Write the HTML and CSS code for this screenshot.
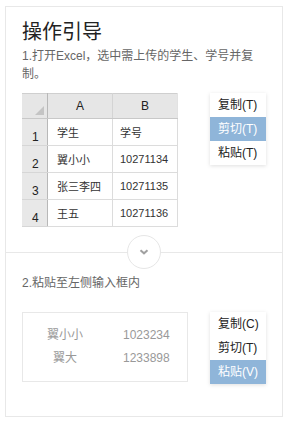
FILE: index.html
```html
<!DOCTYPE html>
<html>

<head>
  <meta charset="utf-8">
  <title>操作引导</title>
  <link rel="stylesheet" href="styles.css">
</head>

<body>
  <div class="panel">
    <div class="section">
      <h1 class="title">操作引导</h1>
      <p class="step">1.打开Excel，选中需上传的学生、学号并复制。</p>

      <div class="row">
        <table class="sheet">
          <tr class="head">
            <th class="corner"><span class="tri"></span></th>
            <th>A</th>
            <th>B</th>
          </tr>
          <tr>
            <td class="num">1</td>
            <td class="col-a">学生</td>
            <td class="col-b">学号</td>
          </tr>
          <tr>
            <td class="num">2</td>
            <td class="col-a">翼小小</td>
            <td class="col-b">10271134</td>
          </tr>
          <tr>
            <td class="num">3</td>
            <td class="col-a">张三李四</td>
            <td class="col-b">10271135</td>
          </tr>
          <tr>
            <td class="num">4</td>
            <td class="col-a">王五</td>
            <td class="col-b">10271136</td>
          </tr>
        </table>

        <ul class="menu">
          <li>复制(T)</li>
          <li class="active">剪切(T)</li>
          <li>粘贴(T)</li>
        </ul>
      </div>
    </div>

    <div class="divider">
      <span class="circle">
        <svg width="10" height="6" viewBox="0 0 10 6">
          <path d="M1.5 1.2 L5 4.3 L8.5 1.2" fill="none" stroke="#a0a0a0" stroke-width="2"/>
        </svg>
      </span>
    </div>

    <div class="section">
      <p class="step step-two">2.粘贴至左侧输入框内</p>

      <div class="row">
        <div class="pasted">
          <span class="name">翼小小</span>
          <span class="no">1023234</span>
          <span class="name">翼大</span>
          <span class="no">1233898</span>
        </div>

        <ul class="menu">
          <li>复制(C)</li>
          <li>剪切(T)</li>
          <li class="active">粘贴(V)</li>
        </ul>
      </div>
    </div>
  </div>
</body>

</html>
```

FILE: styles.css
```css
html, body {
  margin: 0;
  padding: 0;
  background: #fff;
  font-family: "Liberation Sans", "Noto Sans CJK SC", sans-serif;
}

.panel {
  margin: 6px 0 0 5px;
  width: 276px;
  height: 409px;
  border: 1px solid #e8e8e8;
}

.section {
  padding: 0 16px;
}

.title {
  margin: 11px 0 0;
  font-size: 20px;
  line-height: 28px;
  font-weight: normal;
  color: #222;
}

.step {
  margin: 1px 0 0;
  font-size: 12px;
  line-height: 18px;
  color: #666;
}

.row {
  display: flex;
  justify-content: space-between;
  align-items: flex-start;
  margin-top: 10px;
}

/* the excel screenshot */
.sheet {
  border-collapse: collapse;
  font-size: 11px;
  color: #333;
  border-top: 1px solid #cfcfcf;
  border-right: 1px solid #e2e2e2;
  border-bottom: 1px solid #e2e2e2;
}

.sheet th {
  height: 24px;
  padding: 0;
  background: #e6e6e6;
  font-weight: normal;
  font-size: 12px;
  color: #222;
  border-left: 1px solid #d4d4d4;
  border-bottom: 1px solid #c8c8c8;
}

.sheet th:first-child {
  border-left: 0;
}

.sheet td {
  height: 26px;
  padding: 0;
  border: 1px solid #dcdcdc;
  border-top: 0;
}

.sheet .corner {
  width: 25px;
  position: relative;
  border-right: 1px solid #b8b8b8;
}

.tri {
  position: absolute;
  right: 3px;
  bottom: 3px;
  width: 0;
  height: 0;
  border-left: 9px solid transparent;
  border-bottom: 9px solid #c4c4c4;
}

.sheet .num {
  width: 25px;
  background: #e8e8e8;
  border-left: 0;
  border-right: 1px solid #b8b8b8;
  border-bottom: 1px solid #d6d6d6;
  vertical-align: bottom;
  padding: 0 0 1px 10px;
  box-sizing: border-box;
  font-size: 12px;
  color: #222;
}

.sheet .col-a {
  width: 55px;
  padding-left: 9px;
}

.sheet .col-b {
  width: 57px;
  padding-left: 7px;
}

.menu {
  list-style: none;
  margin: 0;
  padding: 0;
  width: 56px;
  background: #fff;
  box-shadow: 0 1px 4px rgba(0, 0, 0, 0.13);
}

.menu li {
  height: 24px;
  line-height: 24px;
  padding-left: 8px;
  font-size: 12px;
  color: #222;
}

.menu .active {
  background: #8fb5d9;
  color: #fff;
}

.divider {
  position: relative;
  height: 34px;
  margin-top: 8px;
  display: flex;
  justify-content: center;
}

.divider::before {
  content: "";
  position: absolute;
  left: 0;
  right: 0;
  top: 17px;
  border-top: 1px solid #e8e8e8;
}

.circle {
  position: relative;
  width: 32px;
  height: 32px;
  border: 1px solid #e6e6e6;
  border-radius: 50%;
  background: #fff;
  display: flex;
  align-items: center;
  justify-content: center;
}

.step-two {
  margin-top: 5px;
}

.step-two + .row {
  margin-top: 20px;
}

.pasted {
  box-sizing: border-box;
  width: 166px;
  height: 70px;
  border: 1px solid #e8e8e8;
  display: grid;
  grid-template-columns: 84px 1fr;
  grid-auto-rows: 23px;
  align-content: center;
  font-size: 12px;
  color: #999;
}

.pasted .name {
  text-align: center;
  line-height: 23px;
}

.pasted .no {
  padding-left: 16px;
  line-height: 23px;
}
```
